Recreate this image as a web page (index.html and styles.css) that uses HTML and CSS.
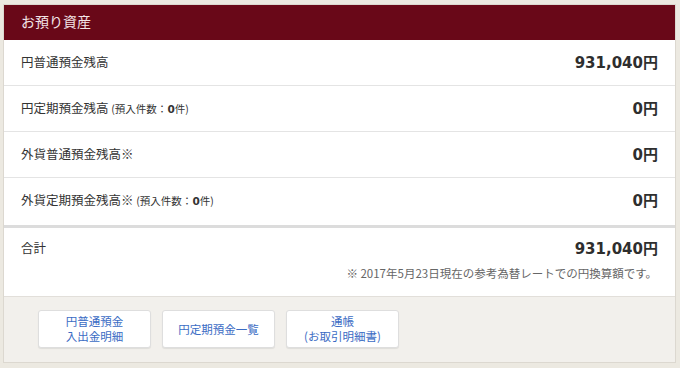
FILE: index.html
```html
<!DOCTYPE html>
<html lang="ja">
<head>
<meta charset="utf-8">
<link rel="stylesheet" href="styles.css">
</head>
<body>
<div class="card">
  <div class="head">お預り資産</div>
  <div class="row">
    <div class="label">円普通預金残高</div>
    <div class="amount">931,040円</div>
  </div>
  <div class="row">
    <div class="label">円定期預金残高 <span class="sub">(預入件数：<b>0</b>件)</span></div>
    <div class="amount">0円</div>
  </div>
  <div class="row">
    <div class="label">外貨普通預金残高※</div>
    <div class="amount">0円</div>
  </div>
  <div class="row last">
    <div class="label">外貨定期預金残高※ <span class="sub">(預入件数：<b>0</b>件)</span></div>
    <div class="amount">0円</div>
  </div>
  <div class="total">
    <div class="total-line">
      <div class="label">合計</div>
      <div class="amount">931,040円</div>
    </div>
    <div class="note">※ 2017年5月23日現在の参考為替レートでの円換算額です。</div>
  </div>
  <div class="foot">
    <a class="btn">円普通預金<br>入出金明細</a>
    <a class="btn">円定期預金一覧</a>
    <a class="btn">通帳<br>(お取引明細書)</a>
  </div>
</div>
</body>
</html>
```
FILE: styles.css
```css
html, body {
  margin: 0;
  padding: 0;
}
body {
  background: #ece9e1;
  font-family: "Noto Sans CJK JP", "Noto Sans", sans-serif;
  color: #333;
  padding: 4px 4px 4px 3px;
}
.card {
  border: 1px solid #dcd8d0;
  background: #fff;
}
.head {
  background: #690818;
  color: #f2e4e6;
  font-size: 14px;
  height: 35px;
  line-height: 33px;
  padding-left: 17px;
}
.row {
  display: flex;
  justify-content: space-between;
  align-items: center;
  border-bottom: 1px solid #e4e4e4;
  padding: 0 17px 2px 17px;
  box-sizing: border-box;
  height: 46px;
}
.row.last {
  border-bottom: 3px solid #dcdcdc;
  height: 50px;
  padding-bottom: 4px;
}
.label {
  font-size: 12.5px;
  color: #333;
}
.sub {
  font-size: 10.5px;
}
.sub b {
  font-family: "DejaVu Sans", sans-serif;
  font-weight: bold;
}
.amount {
  font-family: "DejaVu Sans", "Noto Sans CJK JP", sans-serif;
  font-weight: bold;
  font-size: 15px;
  color: #2e2e2e;
}
.total {
  height: 69px;
  box-sizing: border-box;
  padding: 9px 17px 0 17px;
  border-bottom: 1px solid #e2dfda;
}
.total-line {
  display: flex;
  justify-content: space-between;
  align-items: flex-start;
}
.total .label {
  padding-top: 1px;
}
.note {
  text-align: right;
  font-size: 11.5px;
  color: #666;
  padding-right: 1px;
  margin-top: 7px;
}
.foot {
  background: #f2f0ec;
  height: 65px;
  box-sizing: border-box;
  padding: 13px 0 0 34px;
  display: flex;
  gap: 11px;
  align-items: flex-start;
}
.btn {
  width: 113px;
  height: 38px;
  box-sizing: border-box;
  background: #fff;
  border: 1px solid #dedede;
  border-radius: 3px;
  box-shadow: 0 1px 1px rgba(0,0,0,0.08);
  color: #3b6cc4;
  font-size: 11.5px;
  line-height: 15px;
  display: flex;
  align-items: center;
  justify-content: center;
  text-align: center;
}
```
